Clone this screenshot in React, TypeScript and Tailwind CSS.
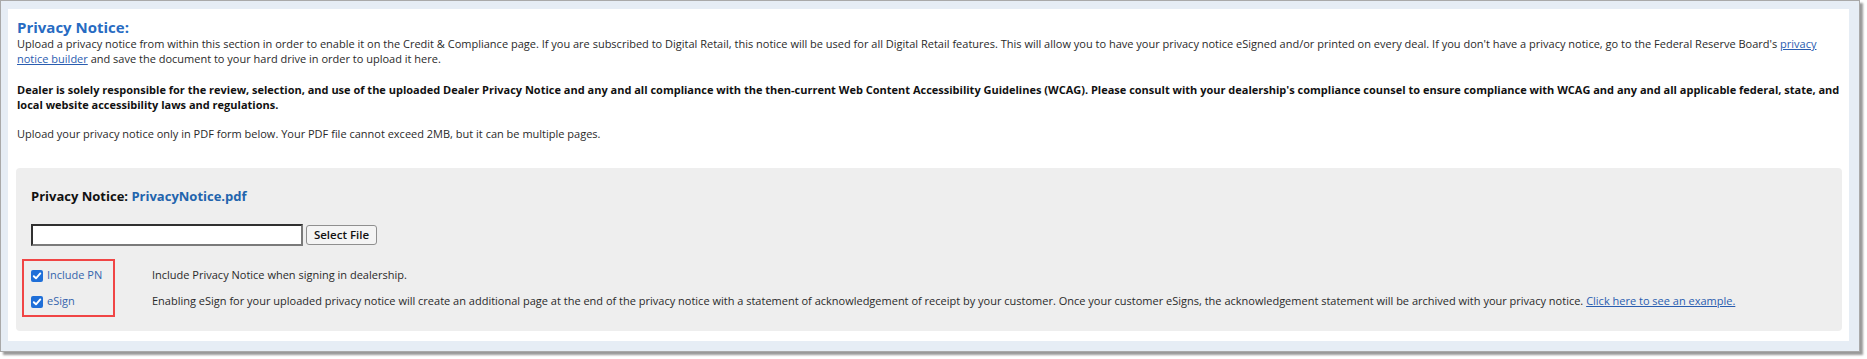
import React from "react";

function Check() {
  return (
    <span className="inline-flex h-[12px] w-[12px] shrink-0 items-center justify-center rounded-[2px] bg-[#1f6fd8]">
      <svg width="10" height="10" viewBox="0 0 10 10" fill="none">
        <path d="M1.8 5.2 L4 7.3 L8.3 2.4" stroke="#ffffff" strokeWidth="1.9" strokeLinecap="round" strokeLinejoin="round" />
      </svg>
    </span>
  );
}

export default function App() {
  return (
    <div className="min-h-[359px] w-[1867px] bg-white" style={{ fontFamily: '"Open Sans", "Noto Sans", sans-serif' }}>
      <div className="box-border flex h-[352px] w-[1860px] border border-[#a9a9a9] bg-[#e6edf5] pb-[10px] pl-[7px] pr-[10px] pt-[8px] shadow-[3px_3px_2px_rgba(0,0,0,0.4)]">
        <div className="flex flex-1 flex-col bg-white pl-[8px] pr-[7px] pt-[8px]">
          <h1 className="pl-[1px] text-[15px] font-bold leading-[20px] text-[#276bc2]">Privacy Notice:</h1>
          <div className="mr-[-6px] pl-[1px] text-[11px] leading-[14.5px] text-[#2a2a2a]">
            <p>
              Upload a privacy notice from within this section in order to enable it on the Credit &amp; Compliance page. If you are subscribed to Digital Retail, this notice will be used for all Digital Retail features. This will allow you to have your privacy notice eSigned and/or printed on every deal. If you don't have a privacy notice, go to the Federal Reserve Board's{" "}
              <a className="text-[#2a5db0] underline">privacy notice builder</a> and save the document to your hard drive in order to upload it here.
            </p>
            <p className="mt-[17px] font-bold text-[#111]">
              Dealer is solely responsible for the review, selection, and use of the uploaded Dealer Privacy Notice and any and all compliance with the then-current Web Content Accessibility Guidelines (WCAG). Please consult with your dealership's compliance counsel to ensure compliance with WCAG and any and all applicable federal, state, and local website accessibility laws and regulations.
            </p>
            <p className="mt-[15px]">Upload your privacy notice only in PDF form below. Your PDF file cannot exceed 2MB, but it can be multiple pages.</p>
          </div>

          <div className="mt-[26px] rounded-[4px] bg-[#eeeeee] pb-[16px] pl-[15px] pt-[20px]">
            <div className="text-[13px] font-bold leading-[16px] text-[#111]">
              Privacy Notice: <span className="text-[#2264ad]">PrivacyNotice.pdf</span>
            </div>
            <div className="mt-[20px] flex items-center">
              <div className="box-border h-[22px] w-[272px] border-2 border-b-[#7a7a7a] border-l-[#303030] border-r-[#7a7a7a] border-t-[#303030] bg-white" />
              <button className="ml-[3px] box-border h-[20px] w-[71px] rounded-[3px] border border-[#8f8f8f] bg-[#f4f4f4] text-[11.5px] font-semibold leading-[18px] text-[#111]">
                Select File
              </button>
            </div>
            <div className="relative mt-[17px]">
              <div className="pointer-events-none absolute left-[-9px] top-[-4px] h-[58px] w-[93px] border-2 border-[#f04545]" />
              <div className="flex h-[26px] items-center text-[11px]">
                <div className="flex w-[121px] items-center">
                  <Check />
                  <span className="ml-[4px] text-[#3565ad]">Include PN</span>
                </div>
                <span className="text-[#2a2a2a]">Include Privacy Notice when signing in dealership.</span>
              </div>
              <div className="flex h-[26px] items-center text-[11px]">
                <div className="flex w-[121px] items-center">
                  <Check />
                  <span className="ml-[4px] text-[#3565ad]">eSign</span>
                </div>
                <span className="text-[#2a2a2a]">
                  Enabling eSign for your uploaded privacy notice will create an additional page at the end of the privacy notice with a statement of acknowledgement of receipt by your customer. Once your customer eSigns, the acknowledgement statement will be archived with your privacy notice.{" "}
                  <a className="text-[#2a5db0] underline">Click here to see an example.</a>
                </span>
              </div>
            </div>
          </div>
        </div>
      </div>
    </div>
  );
}
